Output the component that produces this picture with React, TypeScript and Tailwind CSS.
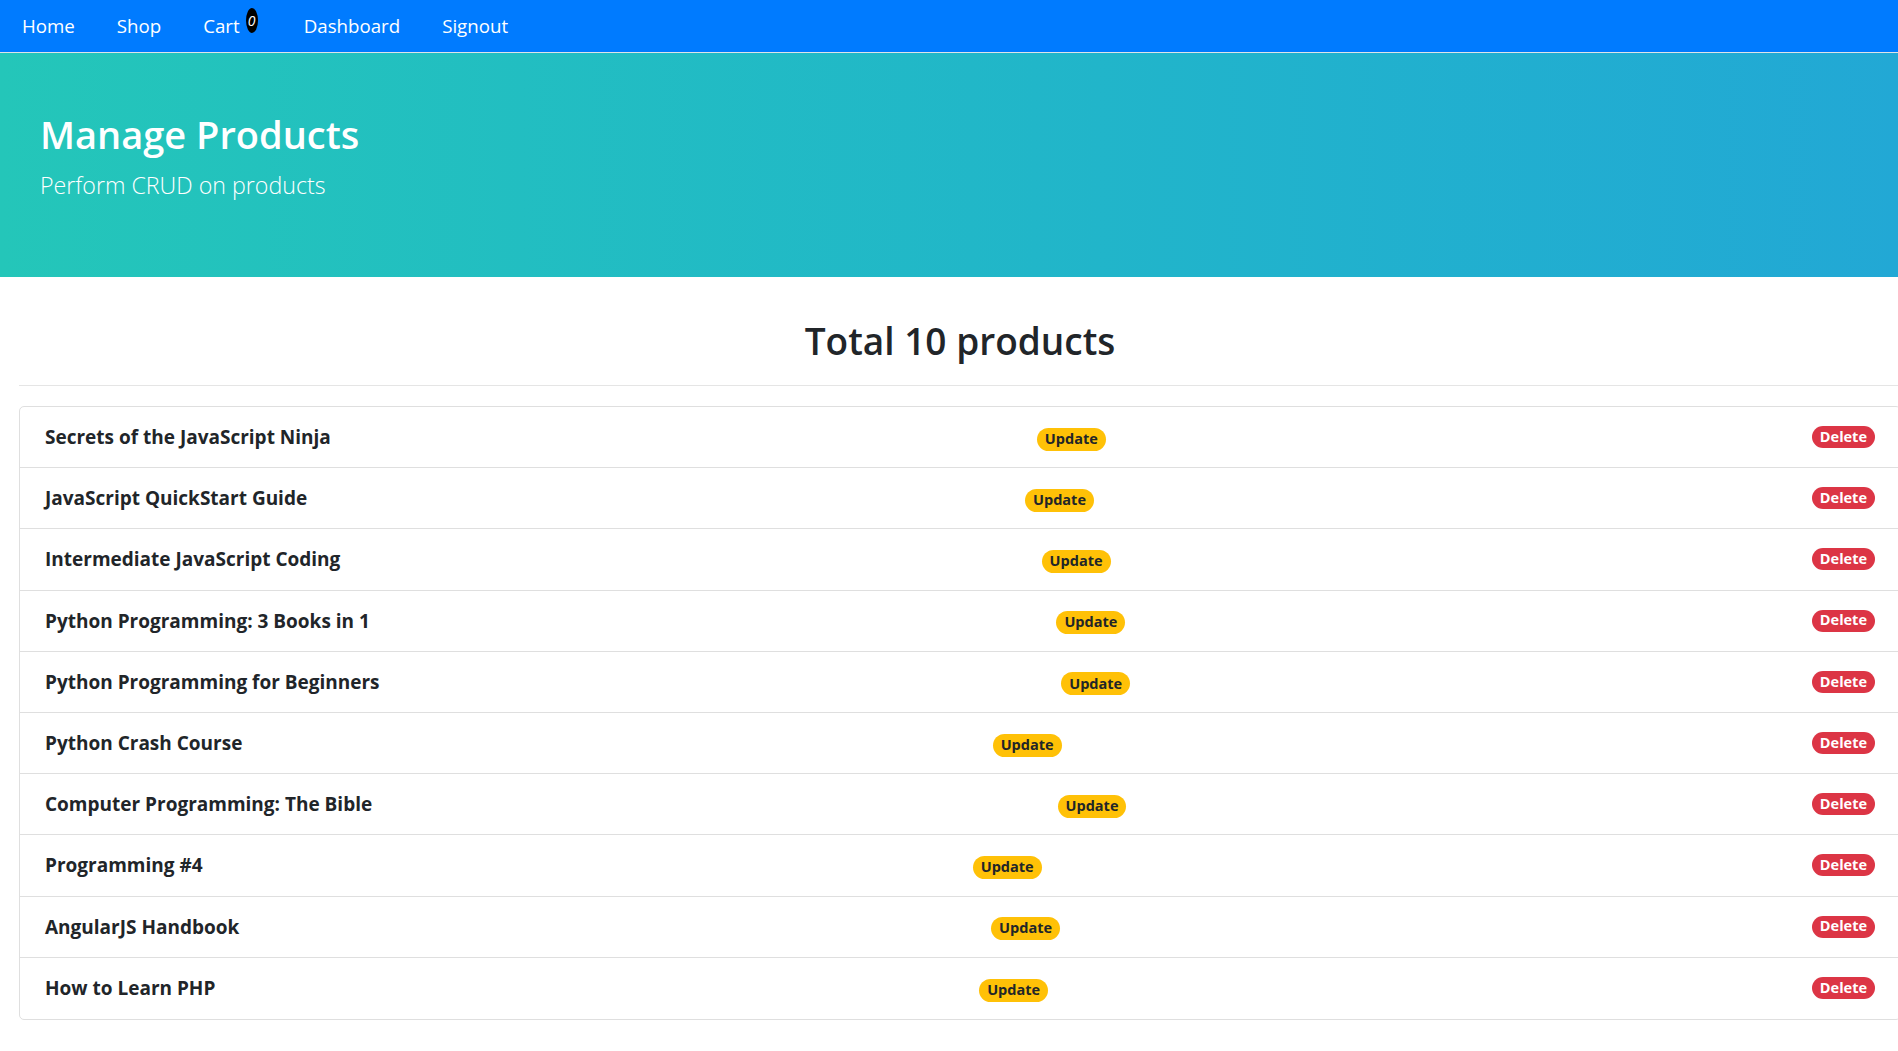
import React from "react";

const products = [
  "Secrets of the JavaScript Ninja",
  "JavaScript QuickStart Guide",
  "Intermediate JavaScript Coding",
  "Python Programming: 3 Books in 1",
  "Python Programming for Beginners",
  "Python Crash Course",
  "Computer Programming: The Bible",
  "Programming #4",
  "AngularJS Handbook",
  "How to Learn PHP",
];

const NavLink = ({ label, badge }: { label: string; badge?: number }) => (
  <a href="#" className="flex items-start px-[21px] text-[18.7px] leading-[30px] text-white">
    <span>{label}</span>
    {badge !== undefined && (
      <span className="ml-[6px] mr-[4px] -mt-[3px] flex h-[25px] w-[12px] items-center justify-center rounded-[50%] bg-black text-[14px] italic leading-none text-white">
        {badge}
      </span>
    )}
  </a>
);

export default function App() {
  return (
    <div
      className="min-h-screen w-full overflow-x-hidden bg-white text-[#212529]"
      style={{ fontFamily: '"Open Sans", "Noto Sans", sans-serif' }}
    >
      {/* Navbar */}
      <nav className="flex h-[53px] items-center border-b border-[#dfe3e8] bg-[#007bff] pl-[1px]">
        <NavLink label="Home" />
        <NavLink label="Shop" />
        <NavLink label="Cart" badge={0} />
        <NavLink label="Dashboard" />
        <NavLink label="Signout" />
      </nav>

      {/* Jumbotron */}
      <header className="h-[224px] bg-linear-to-r from-[#24c6b9] to-[#22a8d5] pl-[40px] pt-[57px] text-white">
        <h1 className="text-[38px] font-semibold leading-[48px]">Manage Products</h1>
        <p className="mt-[9px] text-[23.2px] font-light leading-[37px]">Perform CRUD on products</p>
      </header>

      {/* Content */}
      <main className="ml-[19px] w-[1882px]">
        <h2 className="mt-[40px] text-center text-[37px] font-semibold leading-[48px]">
          Total {products.length} products
        </h2>
        <hr className="mt-[20px] border-t border-[#e5e5e5]" />

        <ul className="mt-[20px] divide-y divide-[#dfdfdf] rounded-[5px] border border-[#dfdfdf]">
          {products.map((name) => (
            <li key={name} className="flex h-[61.2px] items-center justify-between px-[25px]">
              <span className="text-[19px] font-bold leading-[30px]">{name}</span>
              <span className="mt-[4px] inline-flex h-[23px] items-center rounded-full bg-[#ffc107] px-[8px] text-[14.5px] font-bold leading-none text-[#212529]">
                Update
              </span>
              <span className="inline-flex h-[22px] items-center rounded-full bg-[#dc3545] px-[8px] text-[14.5px] font-bold leading-none text-white">
                Delete
              </span>
            </li>
          ))}
        </ul>
      </main>
    </div>
  );
}
